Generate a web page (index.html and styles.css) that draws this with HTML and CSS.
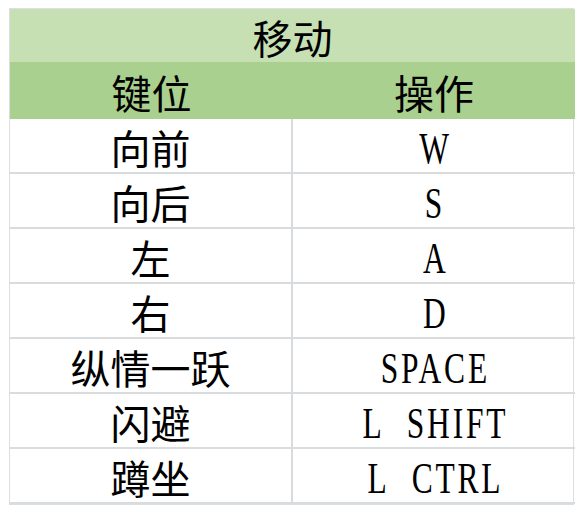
FILE: index.html
```html
<!DOCTYPE html>
<html lang="zh-CN">
<head>
<meta charset="utf-8">
<title>移动</title>
<link rel="stylesheet" href="styles.css">
</head>
<body>
<div class="sheet">
  <div class="cell title">移动</div>
  <div class="cell head">键位</div>
  <div class="cell head">操作</div>

  <div class="cell name">向前</div>
  <div class="cell key"><span>W</span></div>

  <div class="cell name">向后</div>
  <div class="cell key"><span>S</span></div>

  <div class="cell name">左</div>
  <div class="cell key"><span>A</span></div>

  <div class="cell name">右</div>
  <div class="cell key"><span>D</span></div>

  <div class="cell name">纵情一跃</div>
  <div class="cell key"><span>SPACE</span></div>

  <div class="cell name">闪避</div>
  <div class="cell key"><span class="gap">L SHIFT</span></div>

  <div class="cell name">蹲坐</div>
  <div class="cell key"><span class="gap">L CTRL</span></div>
</div>
</body>
</html>
```

FILE: styles.css
```css
html, body {
  margin: 0;
  padding: 0;
  background: #ffffff;
}

body {
  padding: 8px 0 0 9px;
}

.sheet {
  width: 565px;
  display: grid;
  grid-template-columns: 283px 282px;
  border: 1px solid #dcdfe2;
  box-sizing: border-box;
  font-family: "Noto Sans CJK SC", "Noto Sans", sans-serif;
  color: #000000;
}

.cell {
  display: flex;
  align-items: center;
  justify-content: center;
  box-sizing: border-box;
  font-size: 40px;
  line-height: 1;
}

.title {
  grid-column: 1 / -1;
  height: 53px;
  background: #c6e0b4;
  padding-top: 2px;
}

.head {
  height: 57px;
  background: #a9d08e;
  padding-top: 2px;
}

.name,
.key {
  height: 55px;
  border-bottom: 2px solid #d9dcdf;
  padding-top: 2px;
}

.name {
  border-right: 2px solid #d9dcdf;
}

.key span {
  display: inline-block;
  font-family: "Liberation Serif", serif;
  font-size: 45px;
  transform: scaleX(0.7);
  letter-spacing: 4px;
  padding-top: 4px;
  padding-left: 4px;
}

.key .gap {
  word-spacing: 18px;
  white-space: pre;
}
```
